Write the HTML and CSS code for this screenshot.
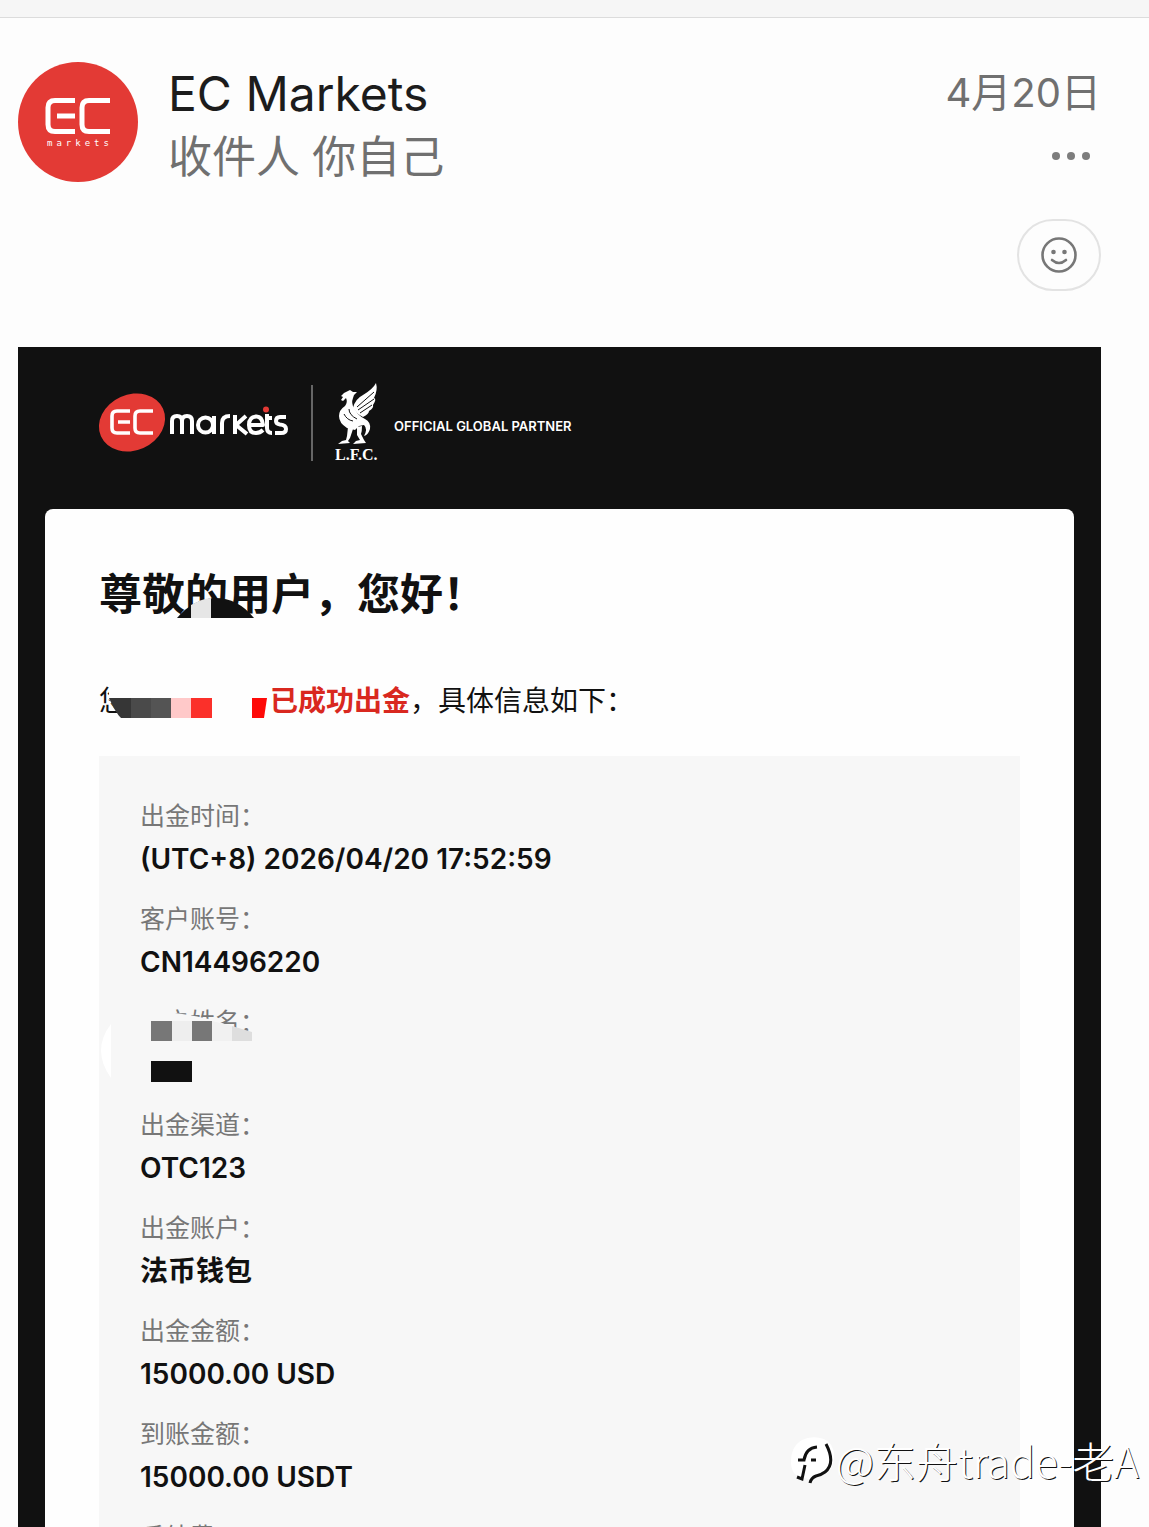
FILE: index.html
```html
<!DOCTYPE html>
<html lang="zh-CN">
  <head>
    <meta charset="UTF-8" />
    <meta name="viewport" content="width=device-width, initial-scale=1.0" />
    <title>EC Markets</title>
    <link rel="stylesheet" href="styles.css">
  </head>
  <body>
    <div class="topbar"></div>

    <!-- mail header start -->
    <header class="mail-header">
      <svg class="avatar" viewBox="0 0 120 120" role="img" aria-label="EC Markets">
        <circle cx="60" cy="60" r="60" fill="#e33a35"/>
        <g fill="none" stroke="#fff" stroke-width="5">
          <path d="M57 38.500H37q-7 0-7 7v17q0 7 7 7H57M39 54H57"/>
          <path d="M92 38.500H71q-7 0-7 7v17q0 7 7 7H92"/>
        </g>
        <text class="avatar-text" x="29" y="84" fill="#fff">markets</text>
      </svg>
      <div class="sender">
        <h1>EC Markets</h1>
        <p>收件人 你自己</p>
      </div>
      <div class="mail-side">
        <time datetime="2026-04-20">4月20日</time>
        <button class="more" type="button" aria-label="更多">
          <svg width="40" height="10" viewBox="0 0 40 10" fill="#7d7d7d">
            <circle cx="5" cy="5" r="4"/><circle cx="20" cy="5" r="4"/><circle cx="35" cy="5" r="4"/>
          </svg>
        </button>
        <button class="react" type="button" aria-label="添加表情">
          <svg width="36" height="36" viewBox="0 0 36 36" fill="none" stroke="#777" stroke-width="2.600" stroke-linecap="round">
            <circle cx="18" cy="18" r="16.500"/>
            <path d="M11 23q7 6 14 0"/>
            <circle cx="12.500" cy="15" r="2.300" fill="#777" stroke="none"/>
            <circle cx="23.500" cy="15" r="2.300" fill="#777" stroke="none"/>
          </svg>
        </button>
      </div>
    </header>
    <!-- mail header end -->

    <!-- mail body start -->
    <main class="mail">
      <div class="brand">
        <svg class="brand-logo" viewBox="0 0 190 60" role="img" aria-label="EC markets">
          <ellipse cx="33" cy="29.500" rx="34" ry="28" fill="#e33a35" transform="rotate(-24 33 29.500)"/>
          <g fill="none" stroke="#fff" stroke-width="3.600">
            <path d="M31 18H18q-5 0-5 5v12q0 5 5 5H31M19 29H31"/>
            <path d="M54 18H41q-5 0-5 5v12q0 5 5 5H54"/>
          </g>
          <g fill="none" stroke="#fff" stroke-width="4" stroke-linejoin="round">
            <path d="M73 41V28q0-5 5-5t5 5V41M83 28q0-5 5-5t5 5V41"/>
            <circle cx="106.500" cy="32" r="7.500"/><path d="M115 23V41"/>
            <path d="M123 41V30q0-7 8-7"/>
            <path d="M136 22V41M147 23L137 32L148 41"/>
            <path d="M151 32H164Q163 23 157 23.500Q150 24 150 32Q150 40 157 40Q161 40 164 37"/>
            <path d="M167 25H173M168 21V35Q168 40 173 40"/>
            <path d="M187 24H181Q177 24 177 28Q177 31 181 31.500Q187 32 187 36Q187 40 182 40H176"/>
          </g>
          <circle cx="167" cy="16.500" r="3" fill="#e33a35"/>
        </svg>
        <span class="brand-line"></span>
        <svg class="bird" viewBox="0 0 44 80" role="img" aria-label="L.F.C.">
          <g fill="#fff">
            <path d="M6 13L9 10L13 8L15 7L18 9L22 9L19 12L18 15Q16 20 19 25L23 31Q26 34 30 36Q36 39 35 46Q33 52 29 53Q33 46 29 42L24 43L20 47L12 45Q4 40 4 33Q4 27 10 23Q13 19 11 15L8 18L6 17L8 14Z"/>
            <path d="M18 25Q20 16 28 12Q38 6 41 0Q43 7 39 15Q42 16 38 22Q39 25 34 28Q34 31 28 34L23 31Z"/>
            <path d="M13 44L18 46L15 55L13 58L15 60L3 61L7 58L11 57L12 53ZM22 44L27 43Q27 48 26 51L29 57L31 60L18 61L21 58L25 57L22 52Z"/>
          </g>
          <path d="M22 24L39 9M23 27L39 16M25 30L37 22M9 31Q12 37 18 38M14 26Q14 32 22 36" fill="none" stroke="#111" stroke-width="1"/>
          <text class="bird-text" x="0" y="77" fill="#fff">L.F.C.</text>
        </svg>
        <span class="partner">OFFICIAL GLOBAL PARTNER</span>
      </div>

      <div class="card">
        <h2>尊敬的用户，您好！
          <svg class="mosaic-title" width="78" height="22" viewBox="0 0 78 22">
            <path d="M0 21Q16 2 38 1Q61 1 77 21Z" fill="#111"/>
            <path d="M14 21V8Q24 2 34 1V21Z" fill="#e6e6e6"/>
          </svg>
        </h2>
        <p class="intro">您<span class="hidden-name">
          <svg class="mosaic-name" width="160" height="36" viewBox="0 0 160 36">
            <path d="M0 0H160V36H14L0 13Z" fill="#fefefe"/>
            <path d="M0 12H22V32H12Q6 26 0 12Z" fill="#363636"/>
            <path d="M22 12H42V32H22Z" fill="#4a4a4a"/>
            <path d="M42 12H62V32H42Z" fill="#545454"/>
            <path d="M62 12H82V32H62Z" fill="#ffc9c9"/>
            <path d="M82 12H103V32H82Z" fill="#fb302a"/>
            <path d="M143 12H158L155 32H143Z" fill="#fe0a08"/>
          </svg></span><strong>已成功出金</strong>，具体信息如下：</p>

        <dl class="details">
          <div><dt>出金时间：</dt><dd>(UTC+8) 2026/04/20 17:52:59</dd></div>
          <div><dt>客户账号：</dt><dd>CN14496220</dd></div>
          <div class="masked">
            <dt>客户姓名：</dt><dd>&nbsp;</dd>
            <svg class="mosaic-customer" width="160" height="84" viewBox="0 0 160 84">
              <path d="M0 0H66L76 7Q120 12 148 28L158 34V84H0Z" fill="#f7f7f7"/>
              <path d="M12 18Q-8 44 12 72Z" fill="#fff"/>
              <path d="M52 15H73V35H52ZM93 15H113V35H93Z" fill="#777"/>
              <path d="M73 15H93V35H73Z" fill="#eee"/>
              <path d="M113 15L133 20V35H113Z" fill="#f1f1f1"/>
              <path d="M133 20L153 26V35H133Z" fill="#dedede"/>
              <path d="M52 55H93V76H52Z" fill="#111"/>
            </svg>
          </div>
          <div><dt>出金渠道：</dt><dd>OTC123</dd></div>
          <div><dt>出金账户：</dt><dd>法币钱包</dd></div>
          <div><dt>出金金额：</dt><dd>15000.00 USD</dd></div>
          <div><dt>到账金额：</dt><dd>15000.00 USDT</dd></div>
          <div><dt>手续费：</dt></div>
        </dl>
      </div>
    </main>
    <!-- mail body end -->

    <div class="watermark">
      <svg width="46" height="48" viewBox="0 0 46 48">
        <path d="M12 4Q22-1 34 3Q45 8 44 22Q43 36 31 40Q24 41 22 47Q19 42 13 42Q1 40 1 26Q1 10 12 4Z" fill="#fff"/>
        <path d="M7 41L12 43L15 29M8 24H14Q16 12 27 11M21 24H26M36 8Q46 27 35 36Q31 39 26 40Q21 42 20 47" fill="none" stroke="#111" stroke-width="3"/>
      </svg>
      <span>@东舟trade-老A</span>
    </div>
  </body>
</html>
```
FILE: styles.css
```css
*{
    padding: 0;
    margin: 0;
    box-sizing: border-box;
}
body{
    position: relative;
    height: 100vh;
    overflow: hidden;
    background: #fdfdfd;
    color: #111;
    font-family: Inter, "Noto Sans CJK SC", sans-serif;
}
button{
    background: none;
    border: none;
    cursor: pointer;
}
svg{
    display: block;
}
.topbar{
    height: 18px;
    background: #f6f6f6;
    border-bottom: 1px solid #dcdcdc;
}

/* mail header */
.mail-header{
    display: flex;
    align-items: flex-start;
    padding: 44px 48px 56px 18px;
}
.avatar{
    width: 120px;
    height: 120px;
}
.avatar-text{
    font-family: "DejaVu Sans Mono", monospace;
    font-size: 9px;
    letter-spacing: 4px;
}
.sender{
    flex: 1;
    padding-left: 30px;
}
.sender h1{
    font-size: 48px;
    font-weight: 400;
    line-height: 64px;
    color: #1c1c1c;
}
.sender p{
    font-size: 44px;
    line-height: 62px;
    color: #707070;
}
.mail-side{
    display: flex;
    flex-direction: column;
    align-items: flex-end;
}
.mail-side time{
    font-size: 40px;
    line-height: 62px;
    color: #707070;
}
.more{
    padding: 27px 10px;
}
.react{
    display: flex;
    align-items: center;
    justify-content: center;
    width: 84px;
    height: 72px;
    border: 2px solid #e3e3e3;
    border-radius: 36px;
    margin-top: 31px;
}

/* mail body */
.mail{
    margin: 0 48px 0 18px;
    padding: 0 27px;
    background: #111;
}
.brand{
    display: flex;
    align-items: center;
    height: 162px;
    padding: 0 54px 10px;
}
.brand-logo{
    width: 190px;
    height: 60px;
    overflow: visible;
}
.brand-line{
    width: 2px;
    height: 76px;
    margin: 0 22px;
    background: #666;
}
.bird{
    width: 44px;
    height: 80px;
}
.bird-text{
    font-family: "Liberation Serif", serif;
    font-size: 16px;
    font-weight: 700;
}
.partner{
    margin-left: 15px;
    padding-top: 6px;
    font-family: Inter, sans-serif;
    font-size: 13px;
    font-weight: 600;
    color: #fff;
}
.card{
    padding: 54px 54px 0;
    background: #fefefe;
    border-radius: 8px;
}
.card h2{
    position: relative;
    font-size: 43px;
    line-height: 62px;
}
.mosaic-title{
    position: absolute;
    left: 78px;
    top: 34px;
}
.intro{
    display: flex;
    margin: 51px 0 30px;
    font-size: 28px;
    line-height: 50px;
}
.intro strong{
    color: #d9281f;
}
.hidden-name{
    position: relative;
    width: 143px;
}
.mosaic-name{
    position: absolute;
    left: -18px;
    top: 10px;
}

/* withdrawal details */
.details{
    display: flex;
    flex-direction: column;
    gap: 17px;
    padding: 40px 41px;
    background: #f7f7f7;
}
.details dt{
    font-size: 25px;
    line-height: 40px;
    color: #777;
}
.details dd{
    font-size: 28px;
    font-weight: 600;
    line-height: 46px;
}
.masked{
    position: relative;
}
.mosaic-customer{
    position: absolute;
    left: -41px;
    top: 4px;
}

.watermark{
    position: absolute;
    right: 10px;
    bottom: 37px;
    display: flex;
    align-items: center;
    font-family: "Noto Sans CJK SC", sans-serif;
    font-size: 42px;
    font-weight: 300;
    line-height: 60px;
    color: #fff;
    text-shadow: 1px 1px 0 #111;
}
```
